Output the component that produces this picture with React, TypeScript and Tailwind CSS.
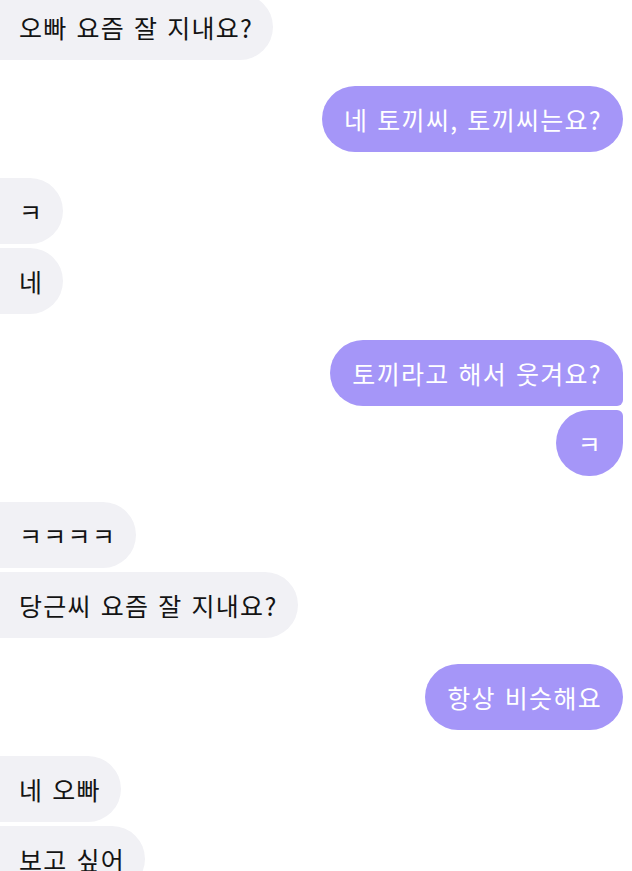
import React from "react";

type Msg = { text: string; mine?: boolean; cls?: string };

// groups of consecutive bubbles from one sender
const groups: Msg[][] = [
  [{ text: "오빠 요즘 잘 지내요?" }],
  [{ text: "네 토끼씨, 토끼씨는요?", mine: true }],
  [{ text: "ㅋ" }, { text: "네" }],
  [
    { text: "토끼라고 해서 웃겨요?", mine: true, cls: "rounded-br-[6px]" },
    { text: "ㅋ", mine: true, cls: "rounded-tr-[6px]" },
  ],
  [{ text: "ㅋㅋㅋㅋ" }, { text: "당근씨 요즘 잘 지내요?" }],
  [{ text: "항상 비슷해요", mine: true }],
  [{ text: "네 오빠" }, { text: "보고 싶어" }],
];

function Bubble({ msg }: { msg: Msg }) {
  if (msg.mine) {
    return (
      <div className="flex justify-end">
        <div
          className={`h-[66px] flex items-center pl-[22px] pr-[21px] rounded-[33px] bg-[#a596f8] text-white text-[25px] tracking-[1.3px] [word-spacing:2px] leading-none whitespace-nowrap ${msg.cls ?? ""}`}
        >
          {msg.text}
        </div>
      </div>
    );
  }
  return (
    <div className="flex justify-start">
      <div className="-ml-[6px] h-[66px] flex items-center pl-[25px] pr-[20px] rounded-r-[33px] rounded-l-[6px] bg-[#f1f1f5] text-[#141414] text-[25px] tracking-[1.3px] [word-spacing:2px] leading-none whitespace-nowrap">
        {msg.text}
      </div>
    </div>
  );
}

export default function App() {
  return (
    <div
      className="w-[632px] h-[871px] overflow-hidden bg-white"
      style={{ fontFamily: '"Noto Sans CJK KR", "Noto Sans", sans-serif' }}
    >
      <div className="-mt-[6px] pr-[9px] flex flex-col gap-[26px]">
        {groups.map((g, i) => (
          <div key={i} className="flex flex-col gap-[4px]">
            {g.map((m, j) => (
              <Bubble key={j} msg={m} />
            ))}
          </div>
        ))}
      </div>
    </div>
  );
}
